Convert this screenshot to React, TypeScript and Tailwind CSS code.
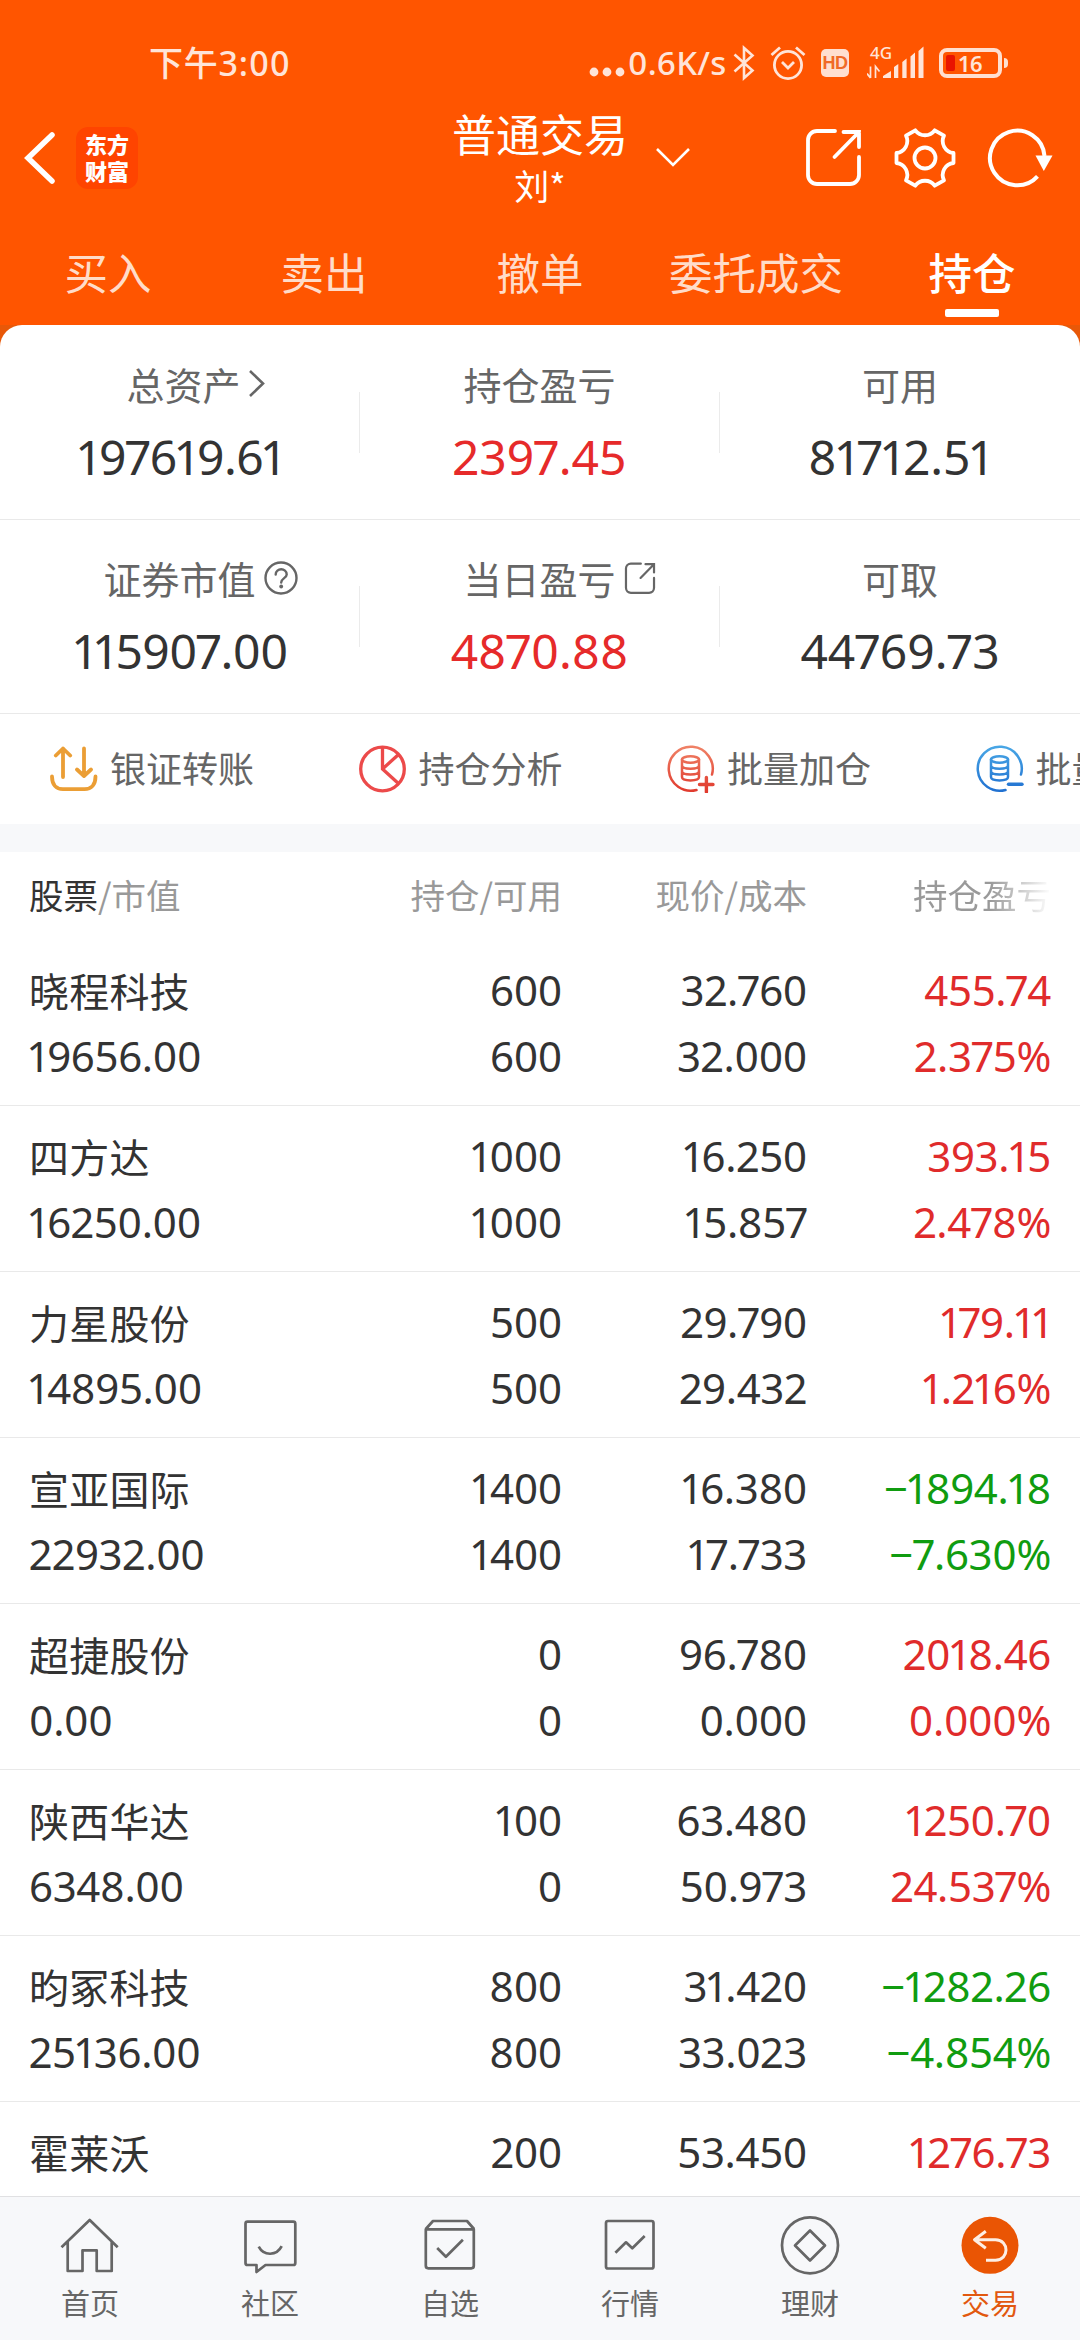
import type { ReactNode } from 'react';
import clsx from 'clsx';

const numFont = "font-['Noto_Sans','Noto_Sans_CJK_SC',sans-serif] [font-feature-settings:'pnum']";

const tabs = ['买入', '卖出', '撤单', '委托成交', '持仓'];

type Holding = {
  name: string;
  qty: string;
  price: string;
  profit: string;
  value?: string;
  avail?: string;
  cost?: string;
  rate?: string;
};

const holdings: Holding[] = [
  { name: '晓程科技', value: '19656.00', qty: '600', avail: '600', price: '32.760', cost: '32.000', profit: '455.74', rate: '2.375%' },
  { name: '四方达', value: '16250.00', qty: '1000', avail: '1000', price: '16.250', cost: '15.857', profit: '393.15', rate: '2.478%' },
  { name: '力星股份', value: '14895.00', qty: '500', avail: '500', price: '29.790', cost: '29.432', profit: '179.11', rate: '1.216%' },
  { name: '宣亚国际', value: '22932.00', qty: '1400', avail: '1400', price: '16.380', cost: '17.733', profit: '−1894.18', rate: '−7.630%' },
  { name: '超捷股份', value: '0.00', qty: '0', avail: '0', price: '96.780', cost: '0.000', profit: '2018.46', rate: '0.000%' },
  { name: '陕西华达', value: '6348.00', qty: '100', avail: '0', price: '63.480', cost: '50.973', profit: '1250.70', rate: '24.537%' },
  { name: '昀冢科技', value: '25136.00', qty: '800', avail: '800', price: '31.420', cost: '33.023', profit: '−1282.26', rate: '−4.854%' },
  { name: '霍莱沃', qty: '200', price: '53.450', profit: '1276.73' },
];

function StatusBar() {
  return (
    <div className="flex h-[94px] items-center pt-[31px] pl-[149px] text-[#ffe4d8]">
      <span className={clsx(numFont, 'text-[34px] leading-none font-medium tracking-[0.8px]')}>下午3:00</span>
      <svg className="ml-auto" width="36" height="36" viewBox="0 0 36 36" fill="currentColor">
        <circle cx="5" cy="27" r="4.4" />
        <circle cx="18" cy="27" r="4.4" />
        <circle cx="31" cy="27" r="4.4" />
      </svg>
      <span className={clsx(numFont, 'ml-[3px] w-[102px] text-[33px] leading-none font-medium tracking-[0.2px]')}>
        0.6K/s
      </span>
      <svg className="ml-[3px]" width="22" height="36" viewBox="0 0 22 36" fill="none" stroke="currentColor" strokeWidth="2.6">
        <path d="M1.5 9.5 19.5 25.5 11 33V3l8.500 7.500L1.500 26.500" />
      </svg>
      <svg className="ml-[15px]" width="36" height="36" viewBox="0 0 36 36" fill="none" stroke="currentColor" strokeWidth="2.8">
        <circle cx="18" cy="20" r="13.600" />
        <path d="m12 17 6 6 6-6M1.500 10l8.500-7.500M34.500 10 26 2.500" />
      </svg>
      <div className="ml-[15px] flex h-7 w-7 items-center justify-center rounded-[5px] bg-[#ffdfd0]">
        <span className="font-['Liberation_Sans',sans-serif] text-[18px] leading-none font-bold tracking-[-0.5px] text-[#f06a28]">
          HD
        </span>
      </div>
      <div className="relative ml-[18px] w-[57px]">
        <svg width="57" height="34" viewBox="0 0 57 34" fill="currentColor">
          <path d="M16 32v-2l8-5v7zM27 32V21l4.300-3v14zM35.300 32V16l4.300-3.500V32zM43.500 32V10.500l4.500-4V32zM51.500 32V5l5-4.500V32z" />
          <path d="M3.500 20.500V32M0 27.500 3.500 32M8.500 32V20.500l4 5" fill="none" stroke="currentColor" strokeWidth="1.700" />
        </svg>
        <span className="absolute -top-[2px] left-[3px] font-['Noto_Sans',sans-serif] text-[17px] leading-none font-medium">4G</span>
      </div>
      <div className="mr-[72px] ml-[15px] flex items-center gap-[2px]">
        <div className="flex h-[30px] w-[63px] items-center rounded-[8px] border-4 border-[#ffdfd0] pl-[3px]">
          <div className="h-4 w-[9px] rounded-[2px] bg-[#e91400]" />
          <span className={clsx(numFont, 'ml-1 text-[22px] leading-none font-semibold')}>16</span>
        </div>
        <div className="h-[10px] w-1 rounded-r bg-[#ffdfd0]" />
      </div>
    </div>
  );
}

function TitleBar() {
  return (
    <div className="grid h-[128px] grid-cols-[1fr_176px_1fr] items-center text-white">
      <div className="flex items-center pl-[23px]">
        <svg width="34" height="54" viewBox="0 0 34 54" fill="none" stroke="currentColor" strokeWidth="5.500" strokeLinecap="round">
          <path d="M29 4 5 27l24 23" />
        </svg>
        <div className="ml-[19px] flex h-[62px] w-[62px] flex-col items-center justify-center gap-[3px] rounded-[12px] bg-[#ff4400] pb-[3px] text-[22px] leading-[24px] font-black">
          <span>东方</span>
          <span>财富</span>
        </div>
      </div>
      <div className="flex flex-col items-center pb-[2px] text-center">
        <span className="text-[44px] leading-[56px] whitespace-nowrap">普通交易</span>
        <span className="text-[35px] leading-[48px]">刘*</span>
      </div>
      <div className="flex items-center">
        <svg className="ml-[27px]" width="36" height="22" viewBox="0 0 36 22" fill="none" stroke="currentColor" strokeWidth="2.600">
          <path d="m2 2 16 16L34 2" />
        </svg>
        <div className="ml-auto flex items-center pr-[27px]">
          <ShareIcon className="h-[60px] w-[57px]" strokeWidth={3.8} />
          <svg className="ml-[31px]" width="64" height="62" viewBox="-32 -31 64 62" fill="none" stroke="currentColor" strokeWidth="3.800" strokeLinejoin="round">
            <path d="M9.700-27.700 19-22.300A12 12 0 0 0 28.500-5V5A12 12 0 0 0 19 22.300L9.700 27.700A12 12 0 0 0-9.700 27.700L-19 22.300A12 12 0 0 0-28.500 5V-5A12 12 0 0 0-19-22.300L-9.700-27.700A12 12 0 0 0 9.700-27.700Z" />
            <circle r="10.500" />
          </svg>
          <svg className="ml-[30px]" width="66" height="62" viewBox="0 0 66 62" fill="none" stroke="currentColor" strokeWidth="4">
            <path d="M57.500 29A27.300 27.300 0 1 0 50.500 49.300" />
            <path d="M48.500 28.500h17l-8.700 15.500z" fill="currentColor" stroke="none" />
          </svg>
        </div>
      </div>
    </div>
  );
}

function ShareIcon({ className, strokeWidth }: { className?: string; strokeWidth: number }) {
  return (
    <svg className={className} viewBox="0 0 57 60" fill="none" stroke="currentColor" strokeWidth={strokeWidth} strokeLinecap="round">
      <path d="M30 3H12a9 9 0 0 0-9 9v35a9 9 0 0 0 9 9h33a9 9 0 0 0 9-9V29" />
      <path d="M38.500 4H54v15M54 4 29.500 29" />
    </svg>
  );
}

function Tabs() {
  return (
    <div className="grid h-[103px] grid-cols-5">
      {tabs.map((tab) => {
        const active = tab === '持仓';
        return (
          <div key={tab} className="flex flex-col items-center pt-[22px]">
            <span className={clsx('text-[43.500px] leading-[56px]', active ? 'font-medium text-white' : 'text-[#ffdcc9]')}>
              {tab}
            </span>
            {active && <div className="mt-[9px] h-2 w-[54px] rounded-[2px] bg-white" />}
          </div>
        );
      })}
    </div>
  );
}

type StatProps = {
  label: string;
  value: string;
  red?: boolean;
  tight?: boolean;
  last?: boolean;
  icon?: ReactNode;
  shift?: boolean;
};

function Stat({ label, value, red, tight, last, icon, shift }: StatProps) {
  return (
    <div className="flex items-center">
      <div className="flex flex-1 flex-col items-center pb-[4px]">
        <div className={clsx('relative text-[38px] leading-[56px] text-[#666]', shift && 'left-[4px]')}>
          {label}
          {icon && <span className="absolute top-0 left-full flex h-full items-center">{icon}</span>}
        </div>
        <span
          className={clsx(
            numFont,
            'mt-[17px] text-[48px] leading-[56px]',
            red ? 'text-[#e62a2a]' : 'text-[#333]',
            tight && 'pl-[3px] tracking-[-0.6px]',
          )}
        >
          {value}
        </span>
      </div>
      {!last && <div className="h-[61px] w-px bg-[#ebebeb]" />}
    </div>
  );
}

function Summary() {
  return (
    <>
      <div className="grid h-[195px] grid-cols-3 border-b border-[#e9e9e9]">
        <Stat
          label="总资产"
          value="197619.61"
          shift
          tight
          icon={
            <svg className="ml-[7px]" width="18" height="30" viewBox="0 0 18 30" fill="none" stroke="currentColor" strokeWidth="2.600">
              <path d="m2 2 13 12.500L2 27" />
            </svg>
          }
        />
        <Stat label="持仓盈亏" value="2397.45" red />
        <Stat label="可用" value="81712.51" last />
      </div>
      <div className="grid h-[194px] grid-cols-3 border-b border-[#e9e9e9]">
        <Stat
          label="证券市值"
          value="115907.00"
          tight
          icon={
            <svg className="ml-[7px]" width="36" height="36" viewBox="0 0 36 36" fill="none" stroke="currentColor" strokeWidth="2.400">
              <circle cx="18" cy="18" r="15.500" />
              <path d="M12.700 14.500c0-7 11-7 11 0 0 3.500-5.500 3.800-5.500 8" strokeLinecap="round" />
              <circle cx="18.200" cy="26.500" r="1.900" fill="currentColor" stroke="none" />
            </svg>
          }
        />
        <Stat label="当日盈亏" value="4870.88" red icon={<ShareIcon className="ml-[8px] h-[33px] w-[32px]" strokeWidth={4} />} />
        <Stat label="可取" value="44769.73" last />
      </div>
    </>
  );
}

function CoinsIcon({ id, from, to, minus }: { id: string; from: string; to: string; minus?: boolean }) {
  return (
    <svg width="48" height="48" viewBox="0 0 48 48" fill="none" stroke={`url(#${id})`} strokeWidth="2.500" strokeLinecap="round">
      <defs>
        <linearGradient id={id} gradientUnits="userSpaceOnUse" x1="0" y1="0" x2="0" y2="48">
          <stop offset="0" stopColor={from} />
          <stop offset="1" stopColor={to} />
        </linearGradient>
      </defs>
      <path d="M45 29.500A22 22 0 1 0 29.500 45" />
      <ellipse cx="23.500" cy="14.500" rx="8.500" ry="3.200" />
      <path d="M15 14.500V32c0 4.500 17 4.500 17 0V14.500M15 20.500c0 4.300 17 4.300 17 0M15 26.300c0 4.300 17 4.300 17 0" />
      <path d={minus ? 'M32.500 39.200H46' : 'M32.500 39.500H46M39.400 32.500V47'} strokeWidth="3.400" />
    </svg>
  );
}

const actions = [
  {
    label: '银证转账',
    icon: (
      <svg width="48" height="48" viewBox="0 0 48 48" fill="none" stroke="#eb9e35" strokeWidth="3.800" strokeLinecap="round" strokeLinejoin="round">
        <path d="M13 32V3.500M5.800 10.500 13 3.500l7.200 7M34 3.500V31M27 24.500l7 6.500 7-6.500" />
        <path d="M2 31.500c0 8 4 12.700 11 12.700h21.500c7 0 11-4.700 11-12.700" />
      </svg>
    ),
  },
  {
    label: '持仓分析',
    icon: (
      <svg width="48" height="48" viewBox="0 0 48 48" fill="none" stroke="#ec4a4a" strokeWidth="3.300">
        <circle cx="23.500" cy="24" r="21.800" />
        <path d="M23.500 2v22l16.500 15M23.500 24 39.500 9.500" />
      </svg>
    ),
  },
  { label: '批量加仓', icon: <CoinsIcon id="coins-add" from="#f08468" to="#e0382c" /> },
  { label: '批量减仓', icon: <CoinsIcon id="coins-sub" from="#4aa8e6" to="#1f6fd0" minus /> },
];

function Actions() {
  return (
    <div className="flex h-[110px] overflow-hidden">
      {actions.map(({ label, icon }) => (
        <div key={label} className="flex w-[308.500px] shrink-0 items-center gap-3 pb-[1px] pl-[50px] text-[36px] leading-[48px] text-[#666]">
          {icon}
          <span className="pb-[3px] whitespace-nowrap">{label}</span>
        </div>
      ))}
    </div>
  );
}

const columns = 'grid grid-cols-[303px_230px_245px_244px] px-[29px]';

function Holdings() {
  return (
    <div className="min-h-0 flex-1 overflow-hidden">
      <div className={clsx(columns, 'h-[88px] items-center pb-[5px] text-[34.500px] leading-[48px] text-[#999]')}>
        <span>
          <span className="text-[#333]">股票</span>/市值
        </span>
        <span className="text-right">持仓/可用</span>
        <span className="text-right">现价/成本</span>
        <span className="bg-linear-to-r from-[#999] from-75% to-white bg-clip-text text-right text-transparent">持仓盈亏</span>
      </div>
      {holdings.map((h) => {
        const color = h.profit.startsWith('−') ? 'text-[#109c10]' : 'text-[#e02b2b]';
        return (
          <div
            key={h.name}
            className={clsx(
              columns,
              numFont,
              'h-[166px] auto-rows-[66px] border-b border-[#e9e9e9] pt-[17px] text-[42px] leading-[66px] tracking-[-0.35px] text-[#333]',
            )}
          >
            <span className="font-['Noto_Sans_CJK_SC',sans-serif] text-[40px] tracking-[0.2px]">{h.name}</span>
            <span className="text-right">{h.qty}</span>
            <span className="text-right">{h.price}</span>
            <span className={clsx('text-right', color)}>{h.profit}</span>
            {h.value && (
              <>
                <span>{h.value}</span>
                <span className="text-right">{h.avail}</span>
                <span className="text-right">{h.cost}</span>
                <span className={clsx('text-right', color)}>{h.rate}</span>
              </>
            )}
          </div>
        );
      })}
    </div>
  );
}

const navItems = [
  {
    label: '首页',
    icon: <path d="M1.500 32.300 29.700 5l28 27.300M7.700 27v29h14.800V35.300h14.200V56h15V27" />,
  },
  {
    label: '社区',
    icon: (
      <>
        <path d="M7.500 6.700h45.800q2 0 2 2V48q0 2-2 2H25.500l-9 7v-7h-9q-2 0-2-2V8.700q0-2 2-2z" />
        <path d="M18.700 31.700c5 9.500 18 9.500 23-.5" />
      </>
    ),
  },
  {
    label: '自选',
    icon: (
      <>
        <path d="M5.800 14.300h48v36.500q0 2.500-2.500 2.500h-43q-2.500 0-2.500-2.500zM5.800 14l7.200-8h34l7 8" />
        <path d="m17.200 33 8.700 8.700 17-17" />
      </>
    ),
  },
  {
    label: '行情',
    icon: (
      <>
        <rect x="6" y="6" width="47.500" height="47.500" rx="2" />
        <path d="m15.400 37.700 10.600-10.400 6.300 6L44.700 21" />
      </>
    ),
  },
  {
    label: '理财',
    icon: (
      <>
        <circle cx="30" cy="30.300" r="28" />
        <path d="m30 15.500 15 15-15 15-15-15z" />
      </>
    ),
  },
  {
    label: '交易',
    icon: (
      <>
        <circle cx="30" cy="30.300" r="28.500" fill="#ea5504" stroke="none" />
        <path d="M25.800 16.300 14.500 24.700l11.300 8.600M14.500 24.700H35.500c14 0 14 20.500 0 20.500H26" stroke="#fdeee4" strokeWidth="3" />
      </>
    ),
  },
];

function BottomNav() {
  return (
    <nav className="grid h-36 shrink-0 grid-cols-6 border-t border-[#e0e0e2] bg-[#f7f8fa]">
      {navItems.map(({ label, icon }) => (
        <div key={label} className={clsx('flex flex-col items-center pt-[18px]', label === '交易' ? 'text-[#e2580f]' : 'text-[#666]')}>
          <svg width="60" height="60" viewBox="0 0 60 60" fill="none" stroke="currentColor" strokeWidth="2.700" strokeLinejoin="round">
            {icon}
          </svg>
          <span className="mt-[7px] text-[29px] leading-[40px]">{label}</span>
        </div>
      ))}
    </nav>
  );
}

export default function App() {
  return (
    <div className="flex h-[2340px] w-[1080px] flex-col overflow-hidden bg-white font-['Noto_Sans_CJK_SC',sans-serif]">
      <header className="bg-[#ff5500]">
        <StatusBar />
        <TitleBar />
        <Tabs />
      </header>
      <div className="shrink-0 bg-[#e85808]">
        <div className="rounded-t-[22px] bg-white">
          <Summary />
          <Actions />
        </div>
      </div>
      <div className="h-7 shrink-0 bg-[#f7f8fa]" />
      <Holdings />
      <BottomNav />
    </div>
  );
}
